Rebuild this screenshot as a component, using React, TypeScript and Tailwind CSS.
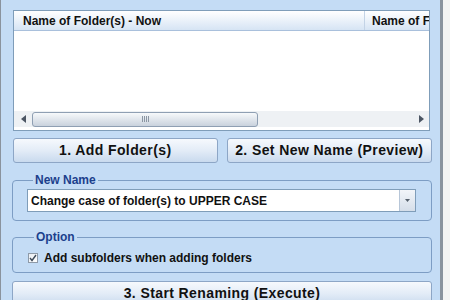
import React from "react";

const font = { fontFamily: '"Liberation Sans", Arial, sans-serif' };

function WinButton({ label, className = "" }: { label: string; className?: string }) {
  return (
    <button
      className={`flex h-[25px] items-center justify-center rounded-[3px] border border-[#8da6c6] bg-gradient-to-b from-[#f6f9fd] via-[#e3ecf7] to-[#c9daee] text-[14px] font-bold tracking-[0.4px] text-[#111] ${className}`}
    >
      {label}
    </button>
  );
}

function HScrollbar() {
  return (
    <div className="mb-[3px] flex h-[16px] items-center bg-[#eef1f4]">
      <div className="flex w-[18px] justify-center">
        <svg width="5" height="8" viewBox="0 0 5 8">
          <path d="M5 0 L0 4 L5 8 Z" fill="#4b5563" />
        </svg>
      </div>
      <div className="flex h-[15px] w-[226px] items-center justify-center rounded-[3px] border border-[#8f9fb3] bg-gradient-to-b from-[#f7f9fb] to-[#c9d2dd]">
        <div className="flex h-[6px] gap-[1px]">
          <div className="w-[1px] bg-[#8b96a3]" />
          <div className="w-[1px] bg-[#8b96a3]" />
          <div className="w-[1px] bg-[#8b96a3]" />
          <div className="w-[1px] bg-[#8b96a3]" />
        </div>
      </div>
      <div className="flex-1" />
      <div className="flex w-[16px] justify-center">
        <svg width="5" height="8" viewBox="0 0 5 8">
          <path d="M0 0 L5 4 L0 8 Z" fill="#4b5563" />
        </svg>
      </div>
    </div>
  );
}

function FolderTable() {
  return (
    <div className="ml-[1px] mr-[2px] flex h-[121px] flex-col border border-[#7f9db9] bg-white">
      <div className="flex h-[20px] border-b border-[#a9c0dc] bg-gradient-to-b from-white to-[#d6e4f4] text-[12px] font-bold text-[#111]">
        <div className="flex w-[351px] items-center border-r border-[#c3d3e6] pl-[9px]">
          Name of Folder(s) - Now
        </div>
        <div className="flex flex-1 items-center overflow-hidden whitespace-nowrap pl-[7px]">
          Name of F
        </div>
      </div>
      <div className="flex-1" />
      <HScrollbar />
    </div>
  );
}

function Group({ title, children, className = "" }: { title: string; children: React.ReactNode; className?: string }) {
  return (
    <fieldset className={`rounded-[4px] border border-[#7d9dc4] ${className}`}>
      <legend className="ml-[6px] px-[2px] text-[12px] font-bold leading-[14px] text-[#1c3f8c]">
        {title}
      </legend>
      {children}
    </fieldset>
  );
}

export default function App() {
  return (
    <div className="flex h-[300px] w-[450px] overflow-hidden bg-[#f3f3f3]" style={font}>
      <div className="flex w-[443px] flex-col border-l border-r-[3px] border-[#8a939e] bg-[#c4dcf5]">
        <div className="h-[3px] bg-[#dbe8f7]" />
        <div className="flex flex-1 flex-col pl-[11px] pr-[8px] pt-[10px]">
          <FolderTable />

          <div className="mt-[7px] grid grid-cols-2 gap-[9px]">
            <WinButton label="1. Add Folder(s)" className="ml-[1px]" />
            <WinButton label="2. Set New Name (Preview)" />
          </div>

          <Group title="New Name" className="mt-[10px] pb-[8px] pl-[14px] pr-[15px]">
            <div className="mt-[2px] flex h-[23px] items-center border border-[#7f9db9] bg-white">
              <span className="flex-1 pl-[3px] text-[12px] font-bold text-[#111]">
                Change case of folder(s) to UPPER CASE
              </span>
              <div className="flex h-full w-[16px] items-center justify-center border-l border-[#b7c6d8] bg-gradient-to-b from-[#f2f5f9] to-[#d5dee9]">
                <svg width="5" height="3" viewBox="0 0 5 3">
                  <path d="M0 0 L5 0 L2.5 3 Z" fill="#55606c" />
                </svg>
              </div>
            </div>
          </Group>

          <Group title="Option" className="mt-[9px] pb-[7px] pl-[15px]">
            <div className="mt-[7px] flex h-[14px] items-center gap-[6px]">
              <div className="flex h-[10px] w-[10px] items-center justify-center border border-[#8e9aa8] bg-gradient-to-br from-[#e9edf2] to-white">
                <svg width="8" height="8" viewBox="0 0 8 8">
                  <path d="M1 4 L3 6.5 L7 1" stroke="#3d4a5a" strokeWidth="1.4" fill="none" />
                </svg>
              </div>
              <span className="text-[12px] font-bold text-[#111]">
                Add subfolders when adding folders
              </span>
            </div>
          </Group>

          <WinButton label="3. Start Renaming (Execute)" className="mt-[8px] shrink-0" />
        </div>
      </div>
    </div>
  );
}
